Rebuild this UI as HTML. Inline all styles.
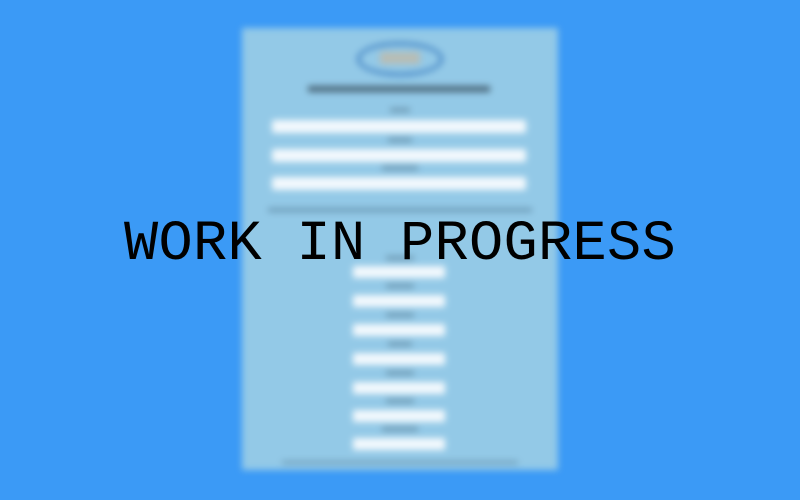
<!DOCTYPE html>
<html><head><style>
html,body{margin:0;padding:0;width:800px;height:500px;overflow:hidden;background:#3b9af6;}
.doc{position:absolute;left:242px;top:28px;width:316px;height:442px;background:#93c9e7;filter:blur(3.5px);}
.bar{position:absolute;background:#f3f9fd;height:13px;border-radius:2px;}
.lbl{position:absolute;height:4px;background:#5a7f95;opacity:.7;}
.sm{position:absolute;width:92px;height:12px;left:111px;background:#f3f9fd;}
.t{position:absolute;left:0;top:219px;width:800px;text-align:center;font-family:"Liberation Mono",monospace;font-size:57px;line-height:52px;color:#000;letter-spacing:0.3px;}
</style></head><body>
<div class="doc">
 <div style="position:absolute;left:115px;top:14px;width:86px;height:34px;border-radius:50%;border:3px solid #3a7cc0;box-sizing:border-box;"></div>
 <div style="position:absolute;left:138px;top:24px;width:40px;height:12px;background:#c8b8a0;opacity:.7"></div>
 <div class="lbl" style="left:66px;top:58px;width:182px;height:6px;background:#2a3c4a"></div>
 <div class="lbl" style="left:148px;top:80px;width:20px"></div>
 <div class="bar" style="left:30px;top:92px;width:254px"></div>
 <div class="lbl" style="left:146px;top:110px;width:24px"></div>
 <div class="bar" style="left:30px;top:121px;width:254px"></div>
 <div class="lbl" style="left:140px;top:138px;width:36px"></div>
 <div class="bar" style="left:30px;top:149px;width:254px"></div>
 <div style="position:absolute;left:26px;top:180px;width:264px;height:4px;background:#6a98b4"></div>
 <div class="lbl" style="left:144px;top:228px;width:28px"></div>
 <div class="sm" style="top:238px"></div>
 <div class="lbl" style="left:144px;top:256px;width:28px"></div>
 <div class="sm" style="top:267px"></div>
 <div class="lbl" style="left:144px;top:285px;width:28px"></div>
 <div class="sm" style="top:296px"></div>
 <div class="lbl" style="left:146px;top:314px;width:24px"></div>
 <div class="sm" style="top:325px"></div>
 <div class="lbl" style="left:144px;top:343px;width:28px"></div>
 <div class="sm" style="top:354px"></div>
 <div class="lbl" style="left:144px;top:371px;width:28px"></div>
 <div class="sm" style="top:382px"></div>
 <div class="lbl" style="left:140px;top:399px;width:36px"></div>
 <div class="sm" style="top:410px"></div>
 <div style="position:absolute;left:40px;top:433px;width:236px;height:3px;background:#6a98b4"></div>
</div>
<div class="t">WORK IN PROGRESS</div>
</body></html>
